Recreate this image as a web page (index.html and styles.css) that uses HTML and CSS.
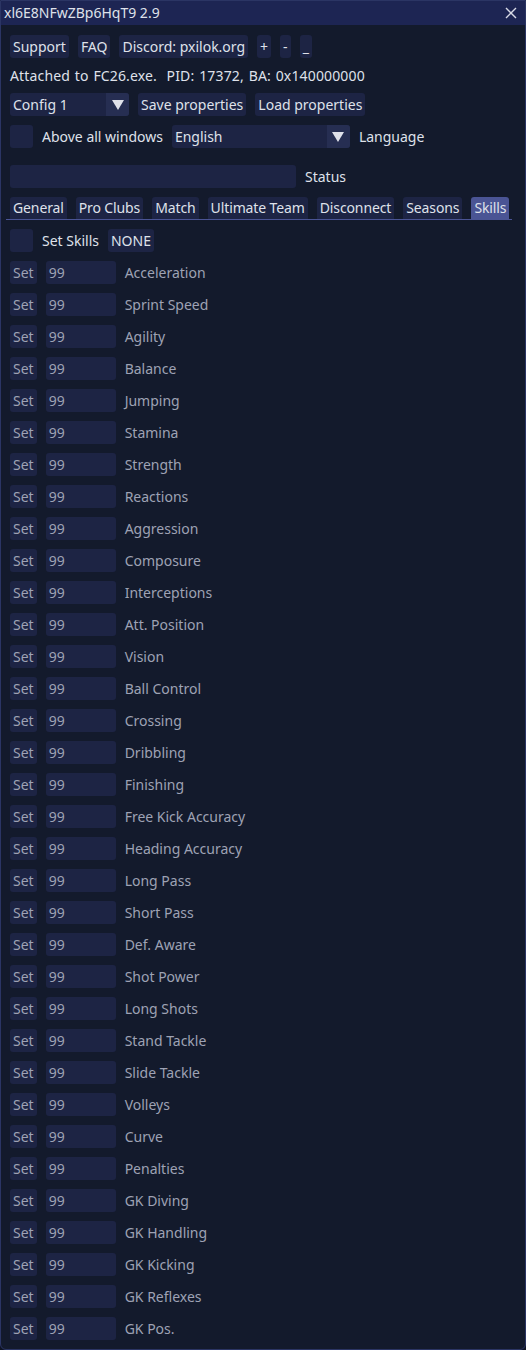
FILE: index.html
```html
<!DOCTYPE html>
<html>
<head>
<meta charset="utf-8">
<link rel="stylesheet" href="styles.css">
</head>
<body>
<div class="window">
  <div class="titlebar">
    <span class="title">xl6E8NFwZBp6HqT9 2.9</span>
    <svg class="close" width="14" height="14" viewBox="0 0 14 14"><path d="M2 2L12 12M12 2L2 12" stroke="#d8dae6" stroke-width="1.4"/></svg>
  </div>
  <div class="content">
    <div class="row">
      <span class="btn">Support</span>
      <span class="btn">FAQ</span>
      <span class="btn">Discord: pxilok.org</span>
      <span class="btn">+</span>
      <span class="btn">-</span>
      <span class="btn">_</span>
    </div>
    <div class="row text">Attached to FC26.exe.&nbsp; PID: 17372, BA: 0x140000000</div>
    <div class="row">
      <span class="combo config"><span class="combo-val">Config 1</span><span class="arrow"><svg width="12" height="10" viewBox="0 0 12 10"><path d="M0 0H12L6 10Z" fill="#dfe1ea"/></svg></span></span>
      <span class="btn">Save properties</span>
      <span class="btn">Load properties</span>
    </div>
    <div class="row">
      <span class="check"></span>
      <span class="label">Above all windows</span>
      <span class="combo lang"><span class="combo-val">English</span><span class="arrow"><svg width="12" height="10" viewBox="0 0 12 10"><path d="M0 0H12L6 10Z" fill="#dfe1ea"/></svg></span></span>
      <span class="label">Language</span>
    </div>
    <div class="row status-row">
      <span class="input status"></span>
      <span class="label">Status</span>
    </div>
    <div class="tabs">
      <span class="tab">General</span>
      <span class="tab">Pro Clubs</span>
      <span class="tab">Match</span>
      <span class="tab">Ultimate Team</span>
      <span class="tab">Disconnect</span>
      <span class="tab">Seasons</span>
      <span class="tab active">Skills</span>
    </div>
    <div class="row">
      <span class="check"></span>
      <span class="label">Set Skills</span>
      <span class="btn">NONE</span>
    </div>
    <div class="skills" id="skills"></div>
  </div>
</div>
<script>
const names = ["Acceleration","Sprint Speed","Agility","Balance","Jumping","Stamina","Strength","Reactions","Aggression","Composure","Interceptions","Att. Position","Vision","Ball Control","Crossing","Dribbling","Finishing","Free Kick Accuracy","Heading Accuracy","Long Pass","Short Pass","Def. Aware","Shot Power","Long Shots","Stand Tackle","Slide Tackle","Volleys","Curve","Penalties","GK Diving","GK Handling","GK Kicking","GK Reflexes","GK Pos."];
const c = document.getElementById('skills');
for (const n of names) {
  const r = document.createElement('div');
  r.className = 'row skill';
  r.innerHTML = '<span class="btn dim set">Set</span><span class="input val">99</span><span class="label dim">' + n + '</span>';
  c.appendChild(r);
}
</script>
</body>
</html>
```
FILE: styles.css
```css
html, body {
  margin: 0;
  padding: 0;
  background: #0f1424;
}
body {
  font-family: "Noto Sans", "Open Sans", sans-serif;
  font-size: 14px;
  color: #dfe1ea;
}
.window {
  width: 524px;
  height: 1348px;
  background: #131a2c;
  border: 1px solid #2b3564;
  border-radius: 0 0 6px 6px;
  overflow: hidden;
}
.titlebar {
  height: 24px;
  background: #1d2553;
  display: flex;
  align-items: center;
  justify-content: space-between;
  padding: 0 7px 0 3px;
}
.title {
  line-height: 24px;
}
.close { display: block; }
.content {
  padding: 10px 9px 0 9px;
  display: flex;
  flex-direction: column;
  gap: 9px;
}
.row {
  display: flex;
  align-items: center;
  gap: 9px;
  height: 23px;
}
.text {
  height: 17px;
  line-height: 17px;
  word-spacing: 1px;
  letter-spacing: 0.15px;
  white-space: nowrap;
}
.btn {
  height: 23px;
  line-height: 23px;
  padding: 0 3px;
  background: #1d2444;
  border-radius: 3px;
  white-space: nowrap;
}
.combo {
  display: flex;
  height: 23px;
  background: #1d2444;
  border-radius: 3px;
  overflow: hidden;
}
.combo-val {
  flex: 1;
  line-height: 23px;
  padding-left: 3px;
  white-space: nowrap;
}
.arrow {
  width: 23px;
  background: #262e52;
  display: flex;
  align-items: center;
  justify-content: center;
}
.config { width: 119px; }
.lang { width: 178px; }
.check {
  width: 23px;
  height: 23px;
  background: #1d2444;
  border-radius: 3px;
  flex: none;
}
.label { white-space: nowrap; }
.status-row { margin-top: 8px; }
.input {
  height: 23px;
  line-height: 23px;
  background: #1d2444;
  border-radius: 3px;
  padding-left: 3px;
  box-sizing: border-box;
}
.status { width: 286px; }
.tabs {
  display: flex;
  gap: 9px;
  height: 22px;
  border-bottom: 1px solid #4a5494;
  margin: 0 4px 0 -4px;
  padding-left: 4px;
}
.tab {
  height: 22px;
  line-height: 22px;
  padding: 0 3px;
  background: #1d2444;
  border-radius: 3px 3px 0 0;
  white-space: nowrap;
  letter-spacing: -0.12px;
}
.tab.active { background: #4a5494; }
.skills {
  display: flex;
  flex-direction: column;
  gap: 9px;
}
.dim { color: #9ea2b4; }
.set { padding: 0 3px; }
.val { width: 70px; color: #9ea2b4; }
```
